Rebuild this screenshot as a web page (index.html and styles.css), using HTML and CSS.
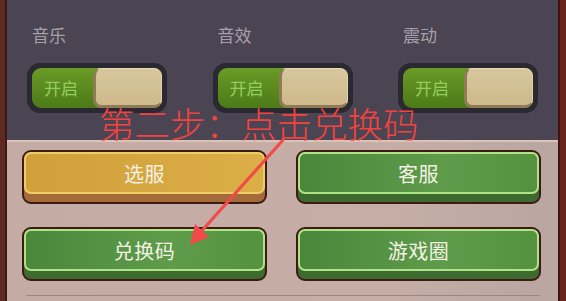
FILE: index.html
```html
<!DOCTYPE html>
<html lang="zh-CN">
<head>
    <meta charset="UTF-8">
    <meta name="viewport" content="width=device-width, initial-scale=1.0">
    <title>设置</title>
    <link rel="stylesheet" href="styles.css">
</head>
<body>
    <div class="frame">
        <div class="panel">
            <div class="settings">
                <div class="setting">
                    <div class="setting-label">音乐</div>
                    <div class="toggle">
                        <div class="toggle-fill">
                            <span class="toggle-text">开启</span>
                            <div class="toggle-knob"></div>
                        </div>
                    </div>
                </div>
                <div class="setting">
                    <div class="setting-label">音效</div>
                    <div class="toggle">
                        <div class="toggle-fill">
                            <span class="toggle-text">开启</span>
                            <div class="toggle-knob"></div>
                        </div>
                    </div>
                </div>
                <div class="setting">
                    <div class="setting-label">震动</div>
                    <div class="toggle">
                        <div class="toggle-fill">
                            <span class="toggle-text">开启</span>
                            <div class="toggle-knob"></div>
                        </div>
                    </div>
                </div>
            </div>
            <div class="actions">
                <div class="buttons">
                    <div class="btn btn-yellow"><div class="btn-face">选服</div></div>
                    <div class="btn btn-green"><div class="btn-face">客服</div></div>
                    <div class="btn btn-green"><div class="btn-face">兑换码</div></div>
                    <div class="btn btn-green"><div class="btn-face">游戏圈</div></div>
                </div>
                <div class="divider"></div>
            </div>
        </div>
    </div>

    <!-- annotation layer -->
    <div class="note">第二步：点击兑换码</div>
    <svg class="arrow" width="566" height="301" viewBox="0 0 566 301">
        <line x1="283" y1="140" x2="199" y2="234" stroke="#f24a48" stroke-width="3.2" stroke-linecap="round"/>
        <polygon points="190,245 195,224 209,237" fill="#f24a48"/>
    </svg>
</body>
</html>
```

FILE: styles.css
```css
* {
    margin: 0;
    padding: 0;
    box-sizing: border-box;
}

body {
    width: 566px;
    height: 301px;
    overflow: hidden;
    position: relative;
    background: #5a2420;
    font-family: "Noto Sans CJK SC", "Noto Sans", sans-serif;
}

.frame {
    height: 301px;
    padding: 0 8px 0 6px;
    background: linear-gradient(to right, #5e2a22 0, #5e2a22 5px, #3e1812 5px, #3e1812 7px, transparent 7px),
                linear-gradient(to left, #6a2420 0, #6a2420 6px, #3e1410 6px, #3e1410 8px, #5a2420 8px);
}

.panel {
    height: 301px;
    margin-left: 1px;
    display: flex;
    flex-direction: column;
}

/* top: sound / vibration switches */
.settings {
    height: 140px;
    background: #4a4453;
    display: grid;
    grid-template-columns: repeat(3, 185.5px);
    padding: 23px 0 0 20px;
}

.setting-label {
    font-size: 17px;
    line-height: 24px;
    color: #a7a0aa;
    padding-left: 5px;
    margin-bottom: 16px;
}

.toggle {
    width: 140px;
    height: 50px;
    background: #2a2830;
    border-radius: 13px;
    padding: 5px;
}

.toggle-fill {
    height: 40px;
    border-radius: 9px;
    background: linear-gradient(to bottom, #6a9a26, #4c7a18);
    display: flex;
    align-items: center;
    justify-content: space-between;
}

.toggle-text {
    font-size: 17px;
    color: #92d05e;
    padding-left: 12px;
    line-height: 20px;
}

.toggle-knob {
    width: 69px;
    height: 40px;
    border-radius: 8px;
    background: linear-gradient(to bottom, #d8c79e, #cdb98a);
    border-left: 3px solid #8f7c56;
    border-bottom: 3px solid #8f7c56;
    border-top: 1px solid #e6d8b4;
    border-right: 1px solid #e2d2aa;
}

/* bottom: buttons */
.actions {
    flex-grow: 1;
    border-top: 2px solid #d9c3bb;
    background: linear-gradient(to right, #c4aca4, #c6aea6 70%, #b9a5a1);
    padding: 8px 18px 0 15px;
}

.buttons {
    display: grid;
    grid-template-columns: 245px 245px;
    column-gap: 29px;
    row-gap: 23px;
}

.btn {
    height: 54px;
    border: 2px solid #3e1a14;
    border-radius: 9px;
    padding-bottom: 8px;
}

.btn-face {
    height: 100%;
    border-radius: 7px;
    border: 2px solid;
    display: flex;
    align-items: center;
    justify-content: center;
    font-size: 20px;
    color: #f3f1e4;
    letter-spacing: 0.5px;
}

.btn-yellow {
    background: #a56a3a;
}

.btn-yellow .btn-face {
    background: linear-gradient(to right, #d0a03a, #dcae46);
    border-color: #ecce66;
}

.btn-green {
    background: #3d6a2e;
}

.btn-green .btn-face {
    background: linear-gradient(to right, #4a873b, #5e9c4b 60%, #55923f);
    border-color: #aee487;
}

.divider {
    margin: 14px 0 0 4px;
    height: 1px;
    width: 514px;
    background: #9c8682;
}

/* red step hint drawn over the screenshot */
.note {
    position: absolute;
    left: 99px;
    top: 104px;
    font-size: 35.5px;
    line-height: 38px;
    font-weight: 300;
    color: #f2433f;
    white-space: nowrap;
}

.arrow {
    position: absolute;
    left: 0;
    top: 0;
}
```
